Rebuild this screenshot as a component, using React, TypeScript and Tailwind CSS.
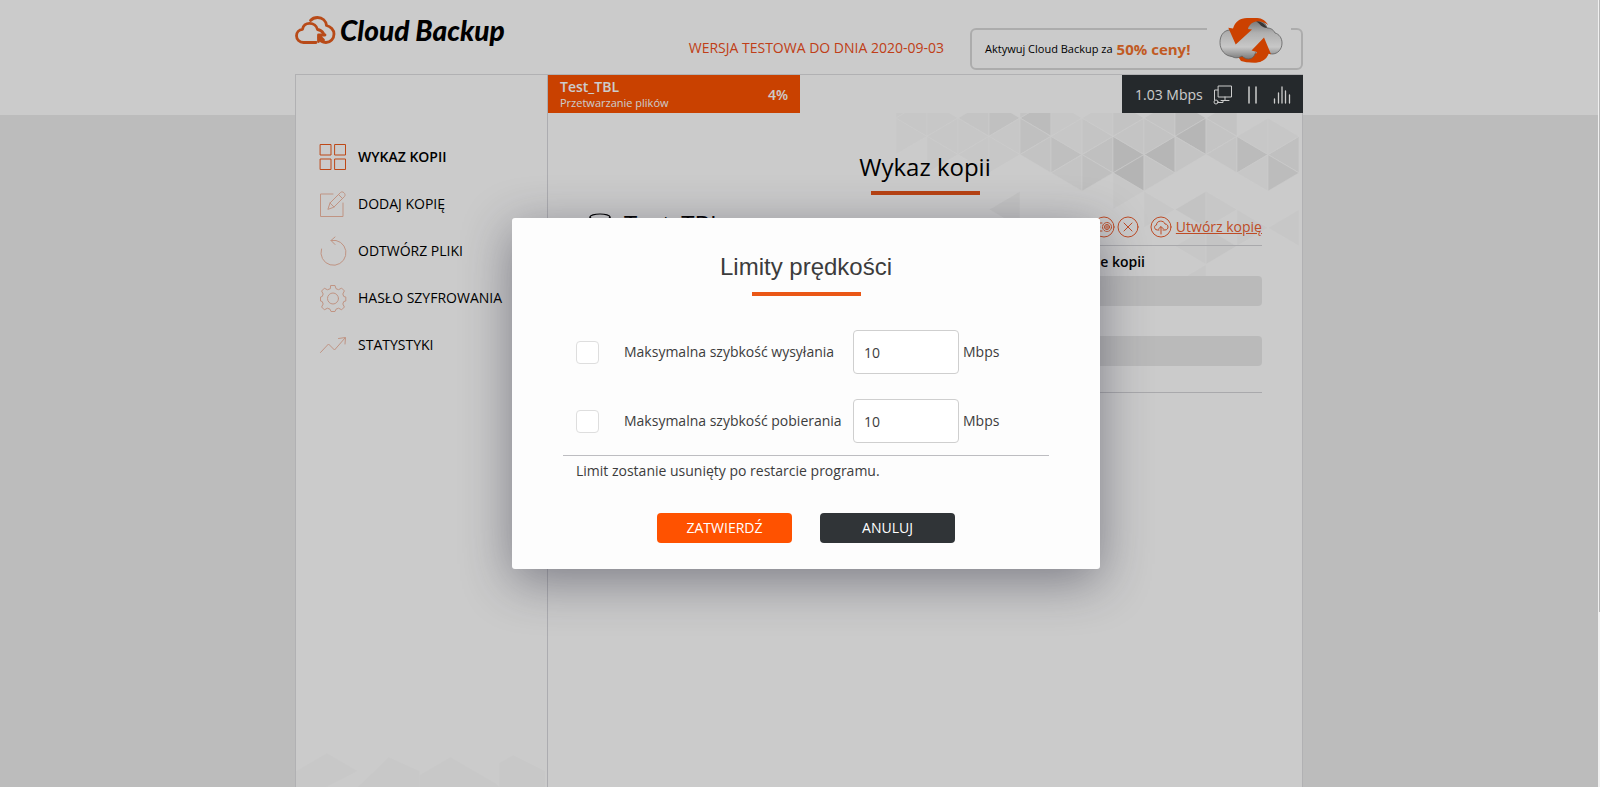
import type { ReactNode } from "react";

type Triangle = [col: number, row: number, side: "L" | "R", shade: number];

const TRIANGLES: Triangle[] = [
  [0, -2, "R", 0.02], [0, 0, "R", 0.01], [0, -1, "L", 0.02],
  [1, -1, "R", 0.02], [1, 0, "L", 0.02], [1, 1, "R", 0.02],
  [2, 0, "R", 0.02], [2, -1, "L", 0.03], [2, 1, "L", 0.02],
  [3, -1, "R", 0.05], [3, 0, "L", 0.02], [3, 1, "R", 0.02], [3, 4, "L", 0.03],
  [4, -1, "L", 0.07], [4, 0, "R", 0.05], [4, 1, "L", 0.04], [4, -2, "R", 0.04],
  [5, 1, "R", 0.06], [5, 0, "L", 0.02], [5, 2, "L", 0.03], [5, -1, "R", 0.02],
  [6, 1, "L", 0.05], [6, 2, "R", 0.06], [6, 0, "R", 0.03], [6, -1, "L", 0.02],
  [7, 1, "R", 0.1], [7, 2, "L", 0.11], [7, 0, "L", 0.03], [7, -1, "R", 0.04], [7, 3, "R", 0.02],
  [8, 1, "L", 0.1], [8, 2, "R", 0.03], [8, 0, "R", 0.04], [8, -1, "L", 0.04], [8, 4, "R", 0.02],
  [9, -1, "R", 0.08], [9, 0, "L", 0.1], [9, 1, "R", 0.03], [9, 4, "L", 0.04], [9, 6, "L", 0.02], [9, 8, "L", 0.02],
  [10, 0, "R", 0.03], [10, -1, "L", 0.04], [10, 1, "L", 0.03], [10, 4, "R", 0.02], [10, 6, "R", 0.03],
  [11, 1, "R", 0.08], [11, 0, "L", 0.02], [11, 2, "L", 0.02], [11, 5, "R", 0.02],
  [12, 1, "L", 0.05], [12, 2, "R", 0.07], [12, 0, "R", 0.02], [12, 5, "L", 0.02],
];

const COL = 31;
const ROW = 18.3;

function Pattern() {
  return (
    <svg className="absolute right-0 top-[38px] h-[240px] w-[406px]" viewBox="0 0 406 240" aria-hidden="true">
      {TRIANGLES.map(([col, row, side, shade]) => {
        const base = side === "R" ? col : col + 1;
        const tip = side === "R" ? col + 1 : col;
        const y = (n: number) => 5 + ROW * n;
        return (
          <polygon
            key={`${col}-${row}-${side}`}
            points={`${base * COL},${y(row)} ${tip * COL},${y(row + 1)} ${base * COL},${y(row + 2)}`}
            fill="#000"
            fillOpacity={shade}
            stroke="#fff"
            strokeOpacity={0.6}
            strokeWidth={1}
          />
        );
      })}
    </svg>
  );
}

function SidebarPattern() {
  return (
    <svg className="absolute bottom-0 left-0 h-[36px] w-full" viewBox="0 0 252 36" aria-hidden="true">
      <g fill="#000" fillOpacity="0.01">
        <path d="M31 2 62 20 31 36H0V20Z" />
        <path d="M93 6 124 20V36H62Z" />
        <path d="M155 6 200 32 204 36H124V24Z" />
        <path d="M218 4 250 20V36H204V12Z" />
      </g>
    </svg>
  );
}

function Logo() {
  return (
    <a href="#" className="flex items-center gap-1">
      <svg className="h-[28px] w-[41px]" viewBox="0 0 41 28" fill="none" stroke="#e65d1e" strokeWidth="2.8" strokeLinecap="round" strokeLinejoin="round">
        <path d="M15.500 4.500C17.500 2.200 20 1.500 22.500 1.500c5 0 8.500 3.200 9 8 4 .8 7.500 4.300 7.500 8.500 0 4.700-3.500 8.500-8 8.500-3.500 0-6-2-7-5" />
        <path d="M21 26.500H8.500c-4 0-7-3-7-6.700 0-3.500 2.500-6.200 6-6.500C8 9.500 11 7.300 14.500 7.300c4 0 7.200 2.700 8 6.200 2 .2 4.500 1.500 6 4" />
        <path d="M23.500 25.500v-6.500h6.500M24.500 20l4 4" />
      </svg>
      <span className="font-['Lato',sans-serif] text-[28px] font-black italic leading-8 text-black">Cloud Backup</span>
    </a>
  );
}

function PromoCloud() {
  return (
    <svg className="absolute right-[18px] top-[-13px] h-[46px] w-[64px]" viewBox="0 0 64 46" aria-hidden="true">
      <defs>
        <linearGradient id="cloud" x1="0" y1="0" x2="0" y2="1">
          <stop offset="0" stopColor="#8a8a8a" />
          <stop offset="0.35" stopColor="#dcdcdc" />
          <stop offset="0.7" stopColor="#fafafa" />
          <stop offset="1" stopColor="#999" />
        </linearGradient>
      </defs>
      <path d="M18 38 22 44Q30 46.500 41 45 49 42 50 35Z" fill="#ff5200" />
      <path
        d="M10 13C4 14 1 19 1 25.500 1 33 6 39 13 39.500c3 2 7 1.500 10-.5 4 4 9 4 12 0l2-4h7l9 2c6 0 10-5 10-11 0-5-3-9-7-10-2-4-5-5-8-5C46 4 40 1 35 2 28 3 24 7 22 12Z"
        fill="url(#cloud)"
        stroke="#777"
        strokeWidth="0.8"
      />
      <path d="M48 11c-2-4-6-7-11-7 4 3 6 7 11 7Z" fill="#444" />
      <path d="M9.300 10.700 14 11.500C16 5 21 1 28 1h10c5 0 9 3 11 7C43 3 35 3 31 8q-2 2-2 4l4 .5-16.300 15Z" fill="#ff5200" />
      <path d="M45 20.500 52 37.300 48.500 36.500C47 42 42 45.500 36 45.500l-6-.5c5-2 8-6 8-10l-5.500-1.500Z" fill="#ff5200" />
    </svg>
  );
}

const thin = { fill: "none", stroke: "currentColor", strokeWidth: 1, strokeLinecap: "round", strokeLinejoin: "round" } as const;

const MENU: { label: string; active?: boolean; icon: ReactNode }[] = [
  {
    label: "WYKAZ KOPII",
    active: true,
    icon: <path d="M.5.500h10.500v10.500H.5zM15 .5h10.500v10.500H15zM.5 15h10.500v10.500H.5zM15 15h10.500v10.500H15z" />,
  },
  {
    label: "DODAJ KOPIĘ",
    icon: <path d="M13 3H.5v22.500H23V12M8 18l2-6L20.500 1.500c2-2 6 1.500 4 4L14 16zM18.500 3.500l4 4M10 12l4 4" />,
  },
  {
    label: "ODTWÓRZ PLIKI",
    icon: <path d="M1.500 11A12.500 12.500 0 1 0 16 2.500H11M15-1l-4 3.500L15 6.500" />,
  },
  {
    label: "HASŁO SZYFROWANIA",
    icon: (
      <>
        <path d="M11 .5h4l1 3.200 2.600 1 3-1.600 2.800 2.800L22.800 9l1 2.500 2 .5v4l-2 .5-1 2.500 1.600 3-2.800 2.800-3-1.600-2.600 1-1 2.300h-4l-1-2.300-2.600-1-3 1.600L1.600 22l1.600-3-1-2.500-1.700-.5v-4l1.700-.5 1-2.500-1.600-3 2.800-2.800 3 1.600 2.600-1z" />
        <circle cx="13" cy="13.500" r="5.500" />
      </>
    ),
  },
  {
    label: "STATYSTYKI",
    icon: <path d="M.5 20.500 8.500 12l6 6L25 6M18.500 6.500 25.500 5.500 25 12" />,
  },
];

function Sidebar() {
  return (
    <nav className="relative w-[252px] shrink-0 border-r border-[#d8d8dc] pt-[58px]">
      <SidebarPattern />
      <ul>
        {MENU.map((item) => (
          <li key={item.label}>
            <a href="#" className="flex h-[47px] items-center gap-3 pl-6 text-sm text-black">
              <svg
                className={item.active ? "size-[26px] overflow-visible text-[#ee5a1c]" : "size-[26px] overflow-visible text-[#f0b9a4]"}
                viewBox="0 0 26 26"
                {...thin}
              >
                {item.icon}
              </svg>
              <span className={item.active ? "font-semibold" : ""}>{item.label}</span>
            </a>
          </li>
        ))}
      </ul>
    </nav>
  );
}

function TopBar() {
  return (
    <div className="flex h-[38px] justify-between text-white">
      <div className="flex w-[252px] items-center justify-between bg-[#fc5200] px-3 pt-0.5">
        <div>
          <p className="text-sm leading-4 font-semibold">Test_TBL</p>
          <p className="text-[11px] leading-4">Przetwarzanie plików</p>
        </div>
        <span className="text-sm font-semibold">4%</span>
      </div>
      <div className="-mr-px flex w-[181px] items-center bg-[#2f3437] pt-0.5 pl-[13px]">
        <span className="text-sm">1.03 Mbps</span>
        <button type="button" aria-label="Limity prędkości" className="ml-[10px]">
          <svg className="h-5 w-[19px]" viewBox="0 0 19 20" {...thin}>
            <path d="M5.500 1h13v11h-13zM12 12v3M8 15.500h8M5 5H1.500v10M5 17.500h5v-2" />
            <circle cx="3" cy="17" r="2" />
          </svg>
        </button>
        <button type="button" aria-label="Wstrzymaj" className="ml-4">
          <svg className="h-5 w-[9px]" viewBox="0 0 9 20" {...thin}>
            <path d="M1 2v16M8 2v16" strokeWidth="1.500" />
          </svg>
        </button>
        <button type="button" aria-label="Statystyki" className="ml-4">
          <svg className="h-5 w-[18px]" viewBox="0 0 18 20" {...thin}>
            <path d="M1.500 14v4M5.500 8v10M9 2v16M12.500 6v12M16.500 10v8" strokeWidth="1.300" />
          </svg>
        </button>
      </div>
    </div>
  );
}

function Circled({ label, children }: { label: string; children: ReactNode }) {
  return (
    <button type="button" aria-label={label}>
      <svg className="size-[22px]" viewBox="0 0 22 22" {...thin}>
        <circle cx="11" cy="11" r="10" />
        {children}
      </svg>
    </button>
  );
}

function BackupPanel() {
  return (
    <main className="relative min-w-0 flex-1">
      <Pattern />
      <TopBar />
      <div className="relative px-10 pt-[38px]">
        <h1 className="text-center text-2xl leading-8 text-black">Wykaz kopii</h1>
        <div className="mx-auto mt-2 h-1 w-[109px] bg-[#e85418]" />

        <div className="mt-[11px] flex h-10 items-center justify-between border-b border-[#d4d4d8]">
          <div className="flex items-center gap-3 self-start text-black">
            <svg className="h-6 w-6" viewBox="0 0 24 24" {...thin}>
              <ellipse cx="12" cy="5" rx="10" ry="3" strokeWidth="1.200" />
              <path d="M2 5v15c0 4 20 4 20 0V5" strokeWidth="1.200" />
            </svg>
            <h2 className="text-2xl leading-9">Test_TBL</h2>
          </div>
          <div className="flex items-center self-end pb-[7px] text-[#ee5f30]">
            <Circled label="Ustawienia kopii">
              <path d="M3 7h6M2 11h5M3 15h6" />
              <circle cx="14" cy="11" r="4.500" strokeDasharray="2 1" />
              <circle cx="14" cy="11" r="2.500" />
              <path d="M14 9v4M12 11h4" strokeWidth="0.700" />
            </Circled>
            <span className="ml-0.5 flex">
              <Circled label="Usuń kopię">
                <path d="M7 7l8 8M15 7l-8 8" />
              </Circled>
            </span>
            <a href="#" className="ml-[11px] flex items-center gap-1 text-sm underline">
              <svg className="size-[22px]" viewBox="0 0 22 22" {...thin}>
                <circle cx="11" cy="11" r="10" />
                <path d="M9 14H7.500c-3.500 0-4-4.500-1-5 0-5 7.500-5 8.500-1 4 0 4 6 0 6h-2M11 18v-7M8.500 13l2.500-2.500 2.500 2.500" />
              </svg>
              Utwórz kopię
            </a>
          </div>
        </div>
        <div className="border-b border-[#d4d4d8] pb-[26px]">
          <p className="pt-[6px] pr-[117px] text-right text-sm font-semibold text-black">Wykonanie kopii</p>
          <div className="mt-1 h-[30px] rounded bg-[#e9e9e9]" />
          <div className="mt-[30px] h-[30px] rounded bg-[#e9e9e9]" />
        </div>
      </div>
    </main>
  );
}

function LimitRow({ id, label }: { id: string; label: string }) {
  return (
    <div className="flex h-11 items-center pl-[13px]">
      <input
        id={id}
        type="checkbox"
        className="size-[23px] appearance-none rounded border border-[#dedede] bg-white checked:bg-[#ff5200]"
      />
      <label htmlFor={id} className="ml-[25px] w-[229px]">
        {label}
      </label>
      <input
        type="text"
        aria-label={`${label} (Mbps)`}
        defaultValue="10"
        className="h-11 w-[106px] rounded border border-[#cfcfcf] bg-white px-[10px] text-sm"
      />
      <span className="ml-1">Mbps</span>
    </div>
  );
}

function LimitDialog() {
  return (
    <div className="absolute inset-0 flex items-center justify-center bg-black/20 pl-3.5">
      <section
        role="dialog"
        aria-labelledby="limit-title"
        className="w-[588px] rounded-[3px] bg-[#fdfdfd] px-[51px] pt-[33px] pb-[26px] text-sm text-[#3c3c3c] shadow-[0_12px_50px_rgba(30,30,50,0.45)]"
      >
        <h2 id="limit-title" className="text-center font-['Liberation_Sans',sans-serif] text-2xl leading-8">
          Limity prędkości
        </h2>
        <div className="mx-auto mt-[9px] h-1 w-[109px] bg-[#ea5716]" />
        <div className="mt-[34px] flex flex-col gap-[25px]">
          <LimitRow id="upload" label="Maksymalna szybkość wysyłania" />
          <LimitRow id="download" label="Maksymalna szybkość pobierania" />
        </div>
        <p className="mt-3 border-t border-[#bdbdc1] pt-[5px] pl-[13px] leading-5">
          Limit zostanie usunięty po restarcie programu.
        </p>
        <div className="mt-8 flex justify-center gap-7 text-white">
          <button type="button" className="h-[30px] w-[135px] rounded bg-[#ff5200]">
            ZATWIERDŹ
          </button>
          <button type="button" className="h-[30px] w-[135px] rounded bg-[#303437]">
            ANULUJ
          </button>
        </div>
      </section>
    </div>
  );
}

export default function App() {
  return (
    <div className="flex h-screen overflow-hidden [font-family:'Open_Sans',sans-serif]">
      <div className="relative flex flex-1 flex-col overflow-hidden bg-[linear-gradient(#fefefe_115px,#ececec_115px)]">
        <div className="mx-auto flex w-full max-w-[1008px] flex-1 flex-col">
          <header className="flex h-[74px] shrink-0 justify-between">
            <div className="pt-[14px]">
              <Logo />
            </div>
            <div className="flex pt-7">
              <p className="mt-[10px] mr-[26px] text-sm font-medium text-[#f04e20]">WERSJA TESTOWA DO DNIA 2020-09-03</p>
              <a href="#" className="relative flex h-[42px] w-[333px] items-center gap-1 rounded-md border-2 border-[#d8d8d8] pl-[13px]">
                <span className="absolute -top-0.5 right-[10px] h-0.5 w-[84px] bg-[#fefefe]" />
                <span className="text-[11px] text-black">Aktywuj Cloud Backup za</span>
                <span className="text-[15px] font-bold text-[#f2712c]">50% ceny!</span>
                <PromoCloud />
              </a>
            </div>
          </header>
          <div className="flex flex-1 border border-b-0 border-[#dedee0] bg-[#fefefe]">
            <Sidebar />
            <BackupPanel />
          </div>
        </div>
        <LimitDialog />
      </div>
      <div className="w-0.5 bg-[#f1f1f1] pl-px">
        <div className="h-[612px] bg-[#b8b8b8]" />
      </div>
    </div>
  );
}
